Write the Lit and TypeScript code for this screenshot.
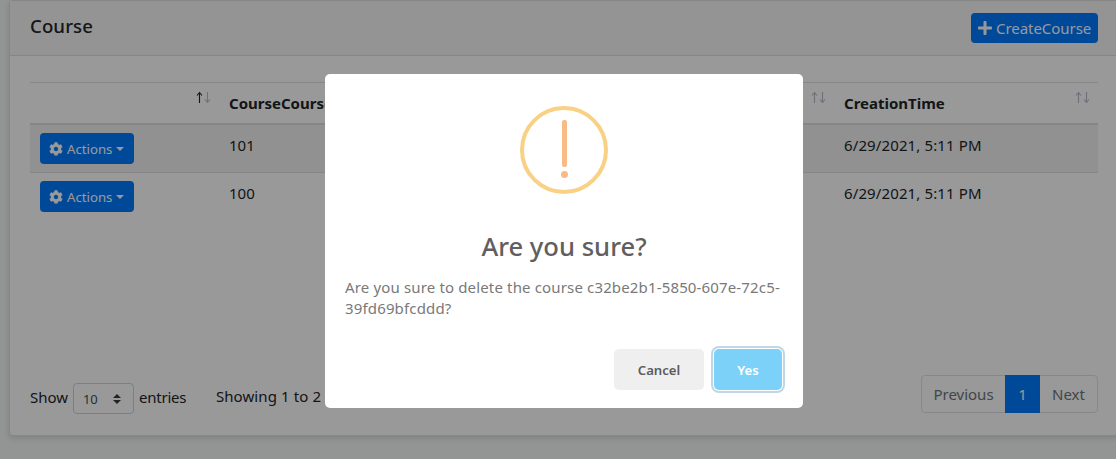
import { LitElement, html, css, svg } from "lit";
import { customElement } from "lit/decorators.js";

const COG =
  "M487.4 315.7l-42.6-24.6c4.3-23.2 4.3-47 0-70.2l42.6-24.6c4.9-2.8 7.1-8.6 5.5-14-11.1-35.6-30-67.8-54.7-94.6-3.8-4.1-10-5.1-14.8-2.3L380.8 110c-17.9-15.4-38.5-27.3-60.8-35.1V25.8c0-5.6-3.9-10.5-9.4-11.7-36.7-8.2-74.3-7.8-109.2 0-5.5 1.2-9.4 6.1-9.4 11.7V75c-22.2 7.9-42.8 19.8-60.8 35.1L88.7 85.5c-4.9-2.8-11-1.9-14.8 2.3-24.7 26.7-43.6 58.9-54.7 94.6-1.7 5.4.6 11.2 5.5 14L67.3 221c-4.3 23.2-4.3 47 0 70.2l-42.6 24.6c-4.9 2.8-7.1 8.6-5.5 14 11.1 35.6 30 67.8 54.7 94.6 3.8 4.1 10 5.1 14.8 2.3l42.6-24.6c17.9 15.4 38.5 27.3 60.8 35.1v49.2c0 5.6 3.9 10.5 9.4 11.7 36.7 8.2 74.3 7.8 109.2 0 5.5-1.2 9.4-6.1 9.4-11.7v-49.2c22.2-7.9 42.8-19.8 60.8-35.1l42.6 24.6c4.9 2.8 11 1.9 14.8-2.3 24.7-26.7 43.6-58.9 54.7-94.6 1.5-5.5-.7-11.3-5.6-14.1zM256 336c-44.1 0-80-35.9-80-80s35.9-80 80-80 80 35.9 80 80-35.9 80-80 80z";
const PLUS =
  "M416 208H272V64c0-17.67-14.33-32-32-32h-32c-17.67 0-32 14.33-32 32v144H32c-17.67 0-32 14.33-32 32v32c0 17.67 14.33 32 32 32h144v144c0 17.67 14.33 32 32 32h32c17.67 0 32-14.33 32-32V304h144c17.67 0 32-14.33 32-32v-32c0-17.67-14.33-32-32-32z";

interface Course {
  code: string;
  created: string;
}

const COURSES: Course[] = [
  { code: "101", created: "6/29/2021, 5:11 PM" },
  { code: "100", created: "6/29/2021, 5:11 PM" },
];

@customElement("app-root")
export class AppRoot extends LitElement {
  static styles = css`
    :host {
      display: block;
      position: relative;
      box-sizing: border-box;
      width: 100%;
      height: 459px;
      padding-left: 9px;
      overflow: hidden;
      background: #f3f8f6;
      color: #212529;
      font-family: "Noto Sans", "Open Sans", sans-serif;
      font-size: 15px;
      line-height: 24px;
    }
    * {
      box-sizing: border-box;
    }
    svg {
      display: block;
      flex: none;
    }
    .card {
      display: flex;
      flex-direction: column;
      width: 1110px;
      height: 436px;
      border: 1px solid #dfdfdf;
      border-radius: 4px;
      background: #fff;
      box-shadow: 0 2px 6px rgba(0, 0, 0, 0.14);
    }
    .card-header {
      display: flex;
      justify-content: space-between;
      align-items: flex-start;
      height: 55px;
      padding: 12px 20px 0;
      background: #f7f7f7;
      border-bottom: 1px solid #dfdfdf;
    }
    .card-title {
      margin: 0;
      font-size: 18.6px;
      font-weight: 500;
      line-height: 25px;
      letter-spacing: 0.1px;
    }
    .btn {
      display: flex;
      align-items: center;
      border: 0;
      border-radius: 4px;
      background: #007bff;
      color: #fff;
      font-family: inherit;
      white-space: nowrap;
    }
    .create {
      width: 127px;
      height: 30px;
      padding: 0 0 0 7px;
      gap: 4px;
      font-size: 15px;
      letter-spacing: -0.05px;
    }
    .card-body {
      flex: 1;
      display: flex;
      flex-direction: column;
      justify-content: space-between;
      padding: 26px 20px 22px;
    }
    .grid {
      width: 1068px;
    }
    .row {
      display: grid;
      grid-template-columns: 189px 300px 315px 264px;
      height: 48px;
      border-top: 1px solid #dfdfdf;
    }
    .row.head {
      height: 43px;
      border-bottom: 2px solid #dfdfdf;
      font-weight: 700;
    }
    .row.odd {
      height: 47px;
      border-top: 0;
      background: #f2f2f2;
    }
    .cell {
      display: flex;
      justify-content: space-between;
      align-items: flex-start;
      padding: 8px 8px 0 10px;
      white-space: nowrap;
    }
    .stamp {
      letter-spacing: 0.12px;
    }
    .actions {
      width: 94px;
      height: 31px;
      padding: 1px 0 0 9px;
      font-size: 13.2px;
    }
    .actions span {
      margin-left: 4px;
    }
    .caret {
      margin: 0 0 1px 4px;
      border-top: 4px solid #fff;
      border-left: 4px solid transparent;
      border-right: 4px solid transparent;
    }
    .footer {
      display: flex;
      justify-content: space-between;
      align-items: flex-end;
    }
    .length {
      display: flex;
      align-items: center;
      height: 38px;
    }
    .select {
      display: flex;
      align-items: center;
      justify-content: space-between;
      width: 61px;
      height: 31px;
      margin: 8px 5px 0 5px;
      padding: 1px 12px 0 9px;
      border: 1px solid #ced4da;
      border-radius: 4px;
      color: #495057;
      font-size: 13px;
    }
    .label {
      padding-top: 5px;
      letter-spacing: -0.05px;
    }
    .entries {
      width: 48px;
      letter-spacing: -0.2px;
    }
    .info {
      padding: 4px 0 0 29px;
      letter-spacing: 0.1px;
    }
    .pager {
      display: grid;
      grid-template-columns: 83px 35px 57px;
      height: 38px;
      border: 1px solid #dee2e6;
      border-radius: 4px;
      width: 177px;
      color: #6c757d;
      text-align: center;
      line-height: 36px;
    }
    .pager .current {
      margin: -1px 0;
      background: #007bff;
      color: #fff;
      line-height: 38px;
    }
    .overlay {
      position: absolute;
      inset: 0;
      display: flex;
      justify-content: center;
      align-items: flex-start;
      padding: 74px 0 0 12px;
      background: rgba(0, 0, 0, 0.4);
    }
    .modal {
      display: flex;
      flex-direction: column;
      width: 478px;
      height: 334px;
      padding: 32px 20px 18px;
      border-radius: 5px;
      background: #fff;
    }
    .warning {
      align-self: center;
    }
    .modal-title {
      margin: 35px 0 0;
      color: #5f5f5f;
      font-size: 25.6px;
      font-weight: 500;
      line-height: 36px;
      text-align: center;
      white-space: nowrap;
    }
    .modal-text {
      margin-top: 12px;
      color: #797979;
      font-size: 15px;
      line-height: 21px;
      letter-spacing: 0.15px;
      white-space: nowrap;
    }
    .modal-footer {
      display: flex;
      justify-content: flex-end;
      gap: 10px;
      margin-top: auto;
    }
    .modal-btn {
      height: 41px;
      padding: 0;
      border: 0;
      border-radius: 5px;
      font-family: inherit;
      font-size: 13.2px;
      font-weight: 600;
      letter-spacing: -0.05px;
    }
    .cancel {
      width: 90px;
      background: #efefef;
      color: #5c5c5c;
    }
    .yes {
      width: 68px;
      margin-right: 1px;
      background: #7cd1f9;
      color: #fff;
      box-shadow: 0 0 0 1px #fff, 0 0 0 3px rgba(43, 114, 165, 0.29);
    }
  `;

  private sort(up: string, down: string) {
    return html`<svg width="16" height="13" viewBox="0 0 16 13" fill="none">
      ${svg`<path d="M4.5 12V2M2 4.5L4.5 1.5L7 4.5" stroke=${up} stroke-width="1.1" />
      <path d="M12.5 1V11M10 8.5L12.5 11.5L15 8.5" stroke=${down} stroke-width="1.1" />`}
    </svg>`;
  }

  render() {
    return html`
      <div class="card">
        <div class="card-header">
          <h5 class="card-title">Course</h5>
          <button class="btn create">
            <svg width="14" height="16" viewBox="0 0 448 512" fill="#fff"><path d=${PLUS} /></svg>
            <span>CreateCourse</span>
          </button>
        </div>
        <div class="card-body">
          <div class="grid">
            <div class="row head">
              <div class="cell"><span></span>${this.sort("#212529", "#bcbdbf")}</div>
              <div class="cell">CourseCourseCode</div>
              <div class="cell"><span></span>${this.sort("#b4bac6", "#b4bac6")}</div>
              <div class="cell">CreationTime${this.sort("#b4bac6", "#b4bac6")}</div>
            </div>
            ${COURSES.map(
              (course, i) => html`<div class="row ${i % 2 ? "" : "odd"}">
                <div class="cell">
                  <button class="btn actions">
                    <svg width="14" height="14" viewBox="0 0 512 512" fill="#fff"><path d=${COG} /></svg>
                    <span>Actions</span><i class="caret"></i>
                  </button>
                </div>
                <div class="cell">${course.code}</div>
                <div class="cell"></div>
                <div class="cell stamp">${course.created}</div>
              </div>`
            )}
          </div>
          <div class="footer">
            <div class="length">
              <span class="label">Show</span>
              <div class="select">
                10
                <svg width="8" height="10" viewBox="0 0 4 5" fill="#343a40"><path d="M2 0L0 2h4zm0 5L0 3h4z" /></svg>
              </div>
              <span class="label entries">entries</span>
              <span class="info">Showing 1 to 2</span>
            </div>
            <div class="pager">
              <span>Previous</span><span class="current">1</span><span>Next</span>
            </div>
          </div>
        </div>
      </div>
      <div class="overlay">
        <div class="modal">
          <svg class="warning" width="88" height="88" viewBox="0 0 88 88">
            <circle cx="44" cy="44" r="42" fill="none" stroke="#f9d184" stroke-width="4" />
            <rect x="42" y="14" width="5" height="47" rx="2" fill="#f8bb86" />
            <circle cx="44.5" cy="68.5" r="3.5" fill="#f8bb86" />
          </svg>
          <div class="modal-title">Are you sure?</div>
          <div class="modal-text">
            Are you sure to delete the course c32be2b1-5850-607e-72c5-<br />39fd69bfcddd?
          </div>
          <div class="modal-footer">
            <button class="modal-btn cancel">Cancel</button>
            <button class="modal-btn yes">Yes</button>
          </div>
        </div>
      </div>
    `;
  }
}
